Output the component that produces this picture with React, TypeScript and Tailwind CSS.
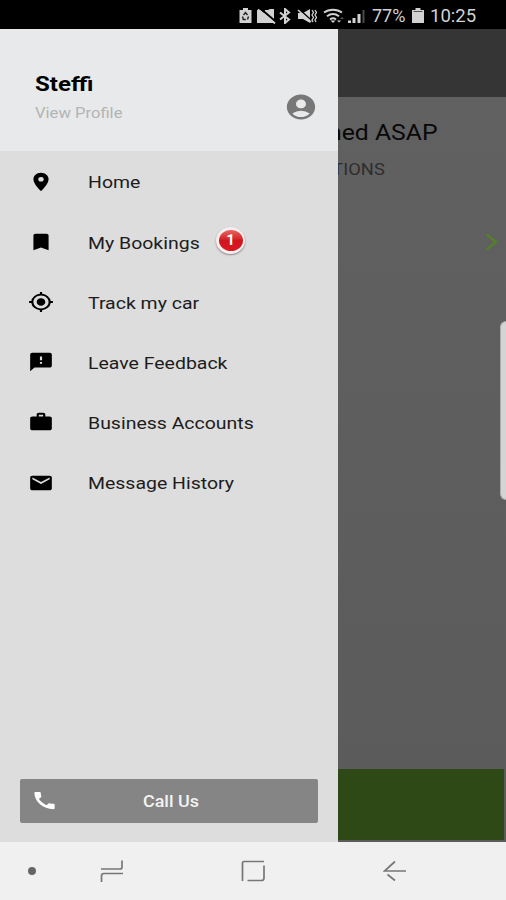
import type { ReactNode } from 'react';
import clsx from 'clsx';
import {
  MdAccountCircle,
  MdBookmark,
  MdCall,
  MdEmail,
  MdFeedback,
  MdMyLocation,
  MdPlace,
  MdWork,
} from 'react-icons/md';
import type { IconType } from 'react-icons';

interface MenuItem {
  label: string;
  icon: IconType;
  badge?: number;
}

const items: MenuItem[] = [
  { label: 'Home', icon: MdPlace },
  { label: 'My Bookings', icon: MdBookmark, badge: 1 },
  { label: 'Track my car', icon: MdMyLocation },
  { label: 'Leave Feedback', icon: MdFeedback },
  { label: 'Business Accounts', icon: MdWork },
  { label: 'Message History', icon: MdEmail },
];

// Slightly widened text, anchored on its left edge
function Wide({ className, children }: { className?: string; children: ReactNode }) {
  return (
    <span className={clsx('inline-block origin-left scale-x-[1.145] whitespace-nowrap', className)}>
      {children}
    </span>
  );
}

function StatusBar() {
  return (
    <header className="flex h-[29px] shrink-0 items-center bg-black pl-[239px] pt-[2px] text-[#d2d2d2]">
      <svg className="h-[15px] w-[13px] shrink-0" viewBox="0 0 13 15">
        <path d="M4 0h5v2h3.500v13H.5V2H4z" fill="currentColor" />
        <path
          d="m4.500 7 2-2.500 2 2.500M9.500 8.500l-1 3M3.500 8.500l.8 3h2.500"
          fill="none"
          stroke="#222"
          strokeWidth="1.400"
        />
      </svg>
      <svg className="ml-[5px] h-[16px] w-[19px] shrink-0" viewBox="0 0 19 16">
        <path d="M0 2h3l4 3 1-3h3l2-1h4v14H0z" fill="currentColor" />
        <path d="m4 1 14 12" stroke="#000" strokeWidth="2" />
        <path d="m1 1.500 17 14" stroke="currentColor" strokeWidth="1.800" />
      </svg>
      <svg className="ml-[3px] h-[16px] w-[12px] shrink-0" viewBox="0 0 12 16">
        <path
          d="m1 4.500 9 7-4 3.500V1l4 3.500-9 7"
          fill="none"
          stroke="currentColor"
          strokeWidth="2"
        />
      </svg>
      <svg className="ml-[6px] h-[16px] w-[20px] shrink-0" viewBox="0 0 20 16">
        <path d="M1 5h5l7-4v14l-7-4H1z" fill="currentColor" />
        <path d="m2 1 11 10" stroke="#000" strokeWidth="1.600" />
        <path d="m1 2 13 12" stroke="currentColor" strokeWidth="1.600" />
        <path
          d="m15 2 1.500 2.500L15 7l1.500 2.500L15 12l1 2M18 2l1.500 2.500L18 7l1.500 2.500L18 12l1 2"
          fill="none"
          stroke="currentColor"
          strokeWidth="1.300"
        />
      </svg>
      <svg className="ml-[6px] h-[16px] w-[22px] shrink-0" viewBox="0 0 22 16">
        <g fill="none" stroke="currentColor" strokeWidth="2">
          <path d="M1 4.500C6 .8 14 .8 19 4.500M4 8.200c4-3 8-3 12 0M7 11.500c2-1.600 4-1.600 6 0" />
        </g>
        <path d="m10 15-2.500-2.500h5z" fill="currentColor" />
        <path d="m17 11 2-2 2 2z" fill="#555" />
        <path d="m14 12.500 2 2 2-2z" fill="currentColor" />
      </svg>
      <svg className="ml-[3px] h-[16px] w-[18px] shrink-0" viewBox="0 0 18 16">
        <path d="M0 12.500h3V15H0zM4.500 10h3v5h-3zM9.500 6h3v9h-3z" fill="currentColor" />
        <path d="M14.500 2h2v13h-2z" fill="#4a4a4a" />
      </svg>
      <span className="ml-[6px] w-[35px] whitespace-nowrap text-[18px] leading-none">77%</span>
      <svg className="ml-[5px] h-[15px] w-[12px] shrink-0" viewBox="0 0 12 15">
        <path d="M3.500 0h5v2H12v13H0V2h3.500z" fill="currentColor" />
        <path d="M1.500 3.500h9" stroke="#555" />
      </svg>
      <span className="ml-[6px] inline-block origin-left scale-x-[1.030] whitespace-nowrap text-[18px] leading-none">
        10:25
      </span>
    </header>
  );
}

function Badge({ count }: { count: number }) {
  return (
    <span className="flex h-[27px] w-[29px] items-center justify-center rounded-[50%] bg-[#f4eeee] shadow-[0_1px_2px_rgba(0,0,0,0.4)]">
      <span className="flex h-[21px] w-[24px] items-center justify-center rounded-[50%] bg-linear-to-b from-[#e8605f] via-[#cf1620] to-[#dc1822] text-[15px] font-bold leading-none text-white">
        {count}
      </span>
    </span>
  );
}

function Drawer() {
  return (
    <aside className="relative z-10 flex w-[338px] shrink-0 flex-col bg-[#dddddd]">
      <div className="flex h-[122px] items-start justify-between bg-[#e7e9ea] pl-[35px] pr-[20px]">
        <div className="flex flex-col items-start">
          <Wide className="mt-[43px] text-[21px] font-bold leading-[24px] text-black">Steffi</Wide>
          <Wide className="mt-[9px] text-[14.500px] leading-[18px] text-[#b2b4b5]">View Profile</Wide>
        </div>
        <MdAccountCircle
          className="mt-[63px] h-[30px] w-[34px] text-[#777777]"
          preserveAspectRatio="none"
        />
      </div>

      <nav className="flex flex-col pt-[0.500px]">
        {items.map(({ label, icon: Icon, badge }) => (
          <a key={label} className="relative flex h-[60.200px] items-center pl-[28px]">
            <Icon className="h-[22px] w-[26px] shrink-0 text-black" preserveAspectRatio="none" />
            <Wide className="ml-[34px] pt-[3px] text-[17px] text-[#1c1c1c]">{label}</Wide>
            {badge && (
              <span className="absolute left-[216px] top-[15px]">
                <Badge count={badge} />
              </span>
            )}
          </a>
        ))}
      </nav>

      <button className="relative mx-[20px] mb-[19px] mt-auto flex h-[44px] items-center justify-center rounded-[2px] bg-[#858585] text-[#f3f3f3]">
        <MdCall
          className="absolute left-[10.500px] top-[10px] h-[23px] w-[27px] text-white"
          preserveAspectRatio="none"
        />
        <span className="ml-[3px] inline-block scale-x-[1.120] pt-[2px] text-[16px] font-medium">
          Call Us
        </span>
      </button>
    </aside>
  );
}

function Backdrop() {
  return (
    <main className="relative flex min-w-0 flex-1 flex-col bg-linear-to-b from-[#616161] to-[#5b5b5b]">
      <div className="h-[68px] shrink-0 bg-[#353535]" />
      <div className="flex flex-col items-end">
        <span className="mr-[68px] mt-[21px] origin-right scale-x-[1.100] whitespace-nowrap text-[22.500px] leading-[28px] text-[#080808]">
          ned ASAP
        </span>
        <span className="mr-[121px] mt-[14px] origin-right scale-x-[1.145] whitespace-nowrap text-[16px] leading-[20px] text-[#2d2d2d]">
          TIONS
        </span>
      </div>
      <svg className="ml-auto mr-[7px] mt-[53px] h-[18px] w-[14px]" viewBox="0 0 14 18">
        <path d="m1.500 1.500 9.500 7.500-9.500 7.500" fill="none" stroke="#557f2c" strokeWidth="2.600" />
      </svg>
      <div className="absolute right-0 top-[292px] h-[179px] w-[6px] rounded-l-[6px] border border-r-0 border-[#ababab] bg-[#d4d4d4]" />
      <div className="mb-[2px] mr-[2px] mt-auto h-[71px] bg-[#2e4915]" />
    </main>
  );
}

function NavBar() {
  return (
    <footer className="flex h-[58px] shrink-0 items-center bg-[#f0f0f0] text-[#777777]">
      <span className="ml-[28px] h-[8px] w-[8px] rounded-[50%] bg-[#666666]" />
      <svg className="ml-[64px] h-[24px] w-[24px]" viewBox="0 0 24 24" fill="none" stroke="currentColor" strokeWidth="1.700">
        <path d="M1 10h19q2 0 2-2V1.500M23 14.500H4q-2.500 0-2.500 2.500v6" />
      </svg>
      <svg className="ml-[117px] h-[22px] w-[24px]" viewBox="0 0 24 22" fill="none" stroke="currentColor" strokeWidth="1.700">
        <path d="M1.500 21V3q0-1.500 1.500-1.500h20M23 5.500V18q0 2.500-2.500 2.500H6.500" />
      </svg>
      <svg className="ml-[118px] h-[22px] w-[24px]" viewBox="0 0 24 22" fill="none" stroke="currentColor" strokeWidth="1.700">
        <path d="M12 1.500 1.500 11H23M4.500 14.500l7.500 6" />
      </svg>
    </footer>
  );
}

export default function App() {
  return (
    <div className="flex h-[900px] w-[506px] flex-col overflow-hidden font-[Roboto,sans-serif]">
      <StatusBar />
      <div className="flex min-h-0 flex-1">
        <Drawer />
        <Backdrop />
      </div>
      <NavBar />
    </div>
  );
}
